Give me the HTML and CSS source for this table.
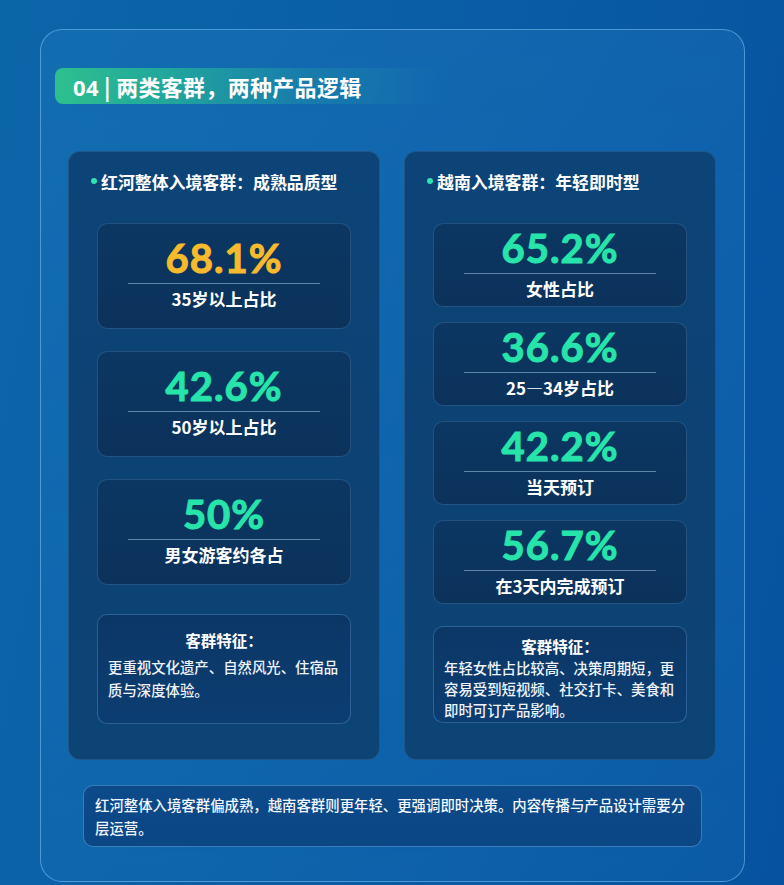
FILE: index.html
```html
<!DOCTYPE html>
<html lang="zh-CN">
<head>
<meta charset="utf-8">
<title>两类客群，两种产品逻辑</title>
<link rel="stylesheet" href="styles.css">
</head>
<body>
<div class="page">
  <section class="panel">
    <h2 class="header"><span class="num">04</span> | 两类客群，两种产品逻辑</h2>
    <div class="columns">
      <div class="col col-left">
        <div class="col-title"><span class="dot"></span>红河整体入境客群：成熟品质型</div>
        <div class="stack stack-left">
          <div class="stat stat-tall">
            <div class="value yellow">68.1%</div>
            <div class="rule"></div>
            <div class="label">35岁以上占比</div>
          </div>
          <div class="stat stat-tall">
            <div class="value">42.6%</div>
            <div class="rule"></div>
            <div class="label">50岁以上占比</div>
          </div>
          <div class="stat stat-tall">
            <div class="value">50%</div>
            <div class="rule"></div>
            <div class="label">男女游客约各占</div>
          </div>
          <div class="feature feature-left">
            <div class="feature-title">客群特征：</div>
            <p class="feature-body">更重视文化遗产、自然风光、住宿品质与深度体验。</p>
          </div>
        </div>
      </div>
      <div class="col col-right">
        <div class="col-title"><span class="dot"></span>越南入境客群：年轻即时型</div>
        <div class="stack stack-right">
          <div class="stat stat-short">
            <div class="value">65.2%</div>
            <div class="rule"></div>
            <div class="label">女性占比</div>
          </div>
          <div class="stat stat-short">
            <div class="value">36.6%</div>
            <div class="rule"></div>
            <div class="label">25—34岁占比</div>
          </div>
          <div class="stat stat-short">
            <div class="value">42.2%</div>
            <div class="rule"></div>
            <div class="label">当天预订</div>
          </div>
          <div class="stat stat-short">
            <div class="value">56.7%</div>
            <div class="rule"></div>
            <div class="label">在3天内完成预订</div>
          </div>
          <div class="feature feature-right">
            <div class="feature-title">客群特征：</div>
            <p class="feature-body">年轻女性占比较高、决策周期短，更容易受到短视频、社交打卡、美食和即时可订产品影响。</p>
          </div>
        </div>
      </div>
    </div>
    <div class="summary">红河整体入境客群偏成熟，越南客群则更年轻、更强调即时决策。内容传播与产品设计需要分层运营。</div>
  </section>
</div>
</body>
</html>
```

FILE: styles.css
```css
* { box-sizing: border-box; }
html, body {
  margin: 0;
  padding: 0;
  width: 784px;
  height: 885px;
  overflow: hidden;
}
body {
  font-family: "Noto Sans CJK SC", "Noto Sans", sans-serif;
  color: #ffffff;
  background: linear-gradient(100deg, #0b66a8 0%, #0a5ea6 45%, #0652a0 100%);
}
.page {
  padding-top: 29px;
  padding-left: 40px;
}
.panel {
  width: 705px;
  height: 853px;
  border: 1px solid rgba(130, 195, 245, 0.55);
  border-radius: 22px;
  background: linear-gradient(180deg, rgba(40, 130, 200, 0.28) 0%, rgba(30, 120, 190, 0.22) 100%);
  padding-top: 38px;
}
.header {
  margin: 0 0 0 14px;
  width: 390px;
  height: 36px;
  line-height: 36px;
  border-radius: 8px;
  padding-left: 18px;
  font-size: 22px;
  font-weight: 700;
  letter-spacing: 0.3px;
  background: linear-gradient(90deg, #2dc08e 0%, #22a79c 28%, rgba(28, 140, 170, 0.6) 62%, rgba(30, 120, 180, 0) 100%);
  white-space: nowrap;
}
.header .num {
  font-family: "Noto Sans", sans-serif;
  font-weight: 700;
}
.columns {
  margin-top: 47px;
  padding-left: 27px;
  display: grid;
  grid-template-columns: 312px 312px;
  column-gap: 24px;
}
.col {
  height: 609px;
  border-radius: 12px;
  border: 1px solid rgba(120, 180, 235, 0.18);
  background: linear-gradient(180deg, #0d4477 0%, #0c4274 60%, #0d4476 100%);
  padding-top: 17px;
}
.col-title {
  display: flex;
  align-items: center;
  padding-left: 22px;
  height: 24px;
  font-size: 16.9px;
  font-weight: 700;
  white-space: nowrap;
}
.dot {
  width: 6px;
  height: 6px;
  border-radius: 50%;
  background: #2fe3b3;
  margin-right: 4px;
  flex: none;
}
.stack {
  margin-top: 30px;
  padding: 0 28px;
  display: flex;
  flex-direction: column;
}
.stack-left { gap: 22px; }
.stack-right { gap: 15px; }
.stat {
  border-radius: 10px;
  border: 1px solid rgba(110, 170, 230, 0.25);
  background: linear-gradient(180deg, #0b3762 0%, #0b325b 100%);
  display: flex;
  flex-direction: column;
  align-items: center;
  justify-content: center;
}
.stat-tall { height: 106px; padding-bottom: 5px; }
.stat-short { height: 84px; padding-bottom: 3px; }
.value {
  font-family: "Lato", "Noto Sans", sans-serif;
  font-weight: 700;
  font-size: 40px;
  line-height: 40px;
  color: #26e4aa;
  letter-spacing: 1px;
  -webkit-text-stroke: 1px currentColor;
}
.value.yellow { color: #f7ba2c; }
.rule {
  align-self: stretch;
  margin: 5px 30px 0;
  height: 1px;
  background: rgba(170, 200, 230, 0.55);
}
.label {
  margin-top: 5px;
  font-size: 17px;
  line-height: 20px;
  font-weight: 700;
  white-space: nowrap;
}
.feature {
  margin-top: 7px;
  border-radius: 10px;
  border: 1px solid rgba(110, 170, 235, 0.35);
  background: linear-gradient(180deg, #0b3766 0%, #0c3d72 100%);
  padding: 0 10px;
}
.feature-left { height: 110px; padding-top: 14px; }
.feature-right { height: 97px; padding-top: 8px; }
.feature-title {
  text-align: center;
  font-size: 15.5px;
  font-weight: 700;
  line-height: 22px;
}
.feature-body {
  margin: 4px 0 0;
  font-size: 14.4px;
  font-weight: 500;
  color: #eef3f9;
}
.feature-left .feature-body { line-height: 23px; }
.feature-right .feature-body { line-height: 21px; margin-top: 0; }
.summary {
  margin: 25px 0 0 42px;
  width: 619px;
  border-radius: 10px;
  border: 1px solid rgba(110, 175, 240, 0.5);
  background: linear-gradient(180deg, #0c4a8a 0%, #0b4685 100%);
  padding: 7px 10px 7px 11px;
  font-size: 14.4px;
  font-weight: 500;
  line-height: 23px;
  color: #f2f6fb;
}
```
